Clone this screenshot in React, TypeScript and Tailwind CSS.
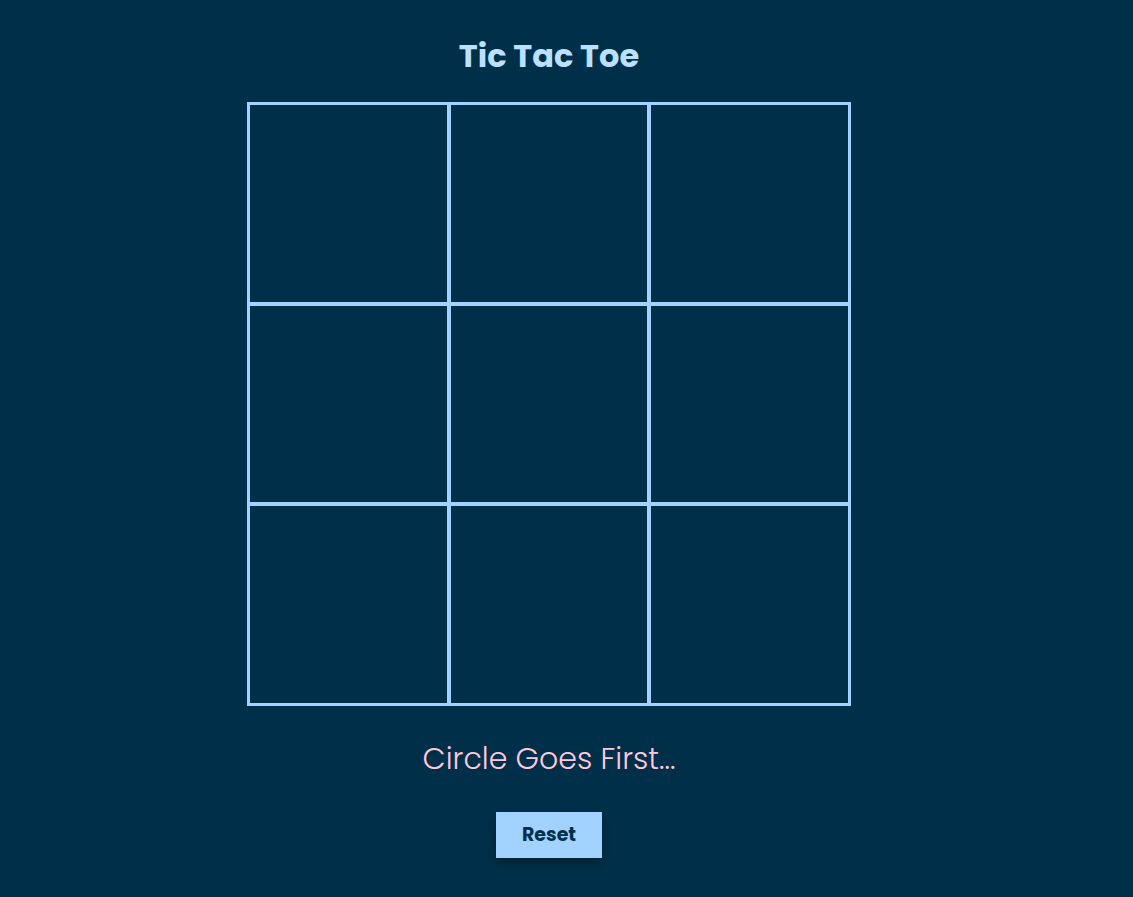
import React, { useState } from "react";

const App = () => {
  const [cells, setCells] = useState<string[]>(Array(9).fill(""));

  return (
    <div
      className="min-h-screen bg-[#003049] flex flex-col items-center pr-[35px]"
      style={{ fontFamily: "Poppins, Inter, 'Noto Sans', sans-serif" }}
    >
      <h1 className="mt-[36px] text-[32px] leading-[40px] font-bold text-[#bde0fe]">
        Tic Tac Toe
      </h1>

      {/* board: outer lines 3px, inner lines 4px */}
      <div className="mt-[26px] w-[604px] h-[604px] grid grid-cols-3 grid-rows-3 gap-[4px] p-[3px] bg-[#a2d2ff]">
        {cells.map((c, i) => (
          <div
            key={i}
            className="bg-[#003049] flex items-center justify-center text-[#ffc8dd] text-6xl cursor-pointer"
            onClick={() => {
              const next = [...cells];
              next[i] = c ? c : "O";
              setCells(next);
            }}
          >
            {c}
          </div>
        ))}
      </div>

      <p className="mt-[33px] text-[30px] leading-[40px] font-light text-[#ffc8dd]">
        Circle Goes First...
      </p>

      <button
        className="mt-[33px] w-[106px] h-[46px] bg-[#a2d2ff] text-[#003049] text-[19px] font-bold shadow-[0_4px_10px_rgba(0,0,0,0.35)]"
        onClick={() => setCells(Array(9).fill(""))}
      >
        Reset
      </button>
    </div>
  );
};

export default App;
